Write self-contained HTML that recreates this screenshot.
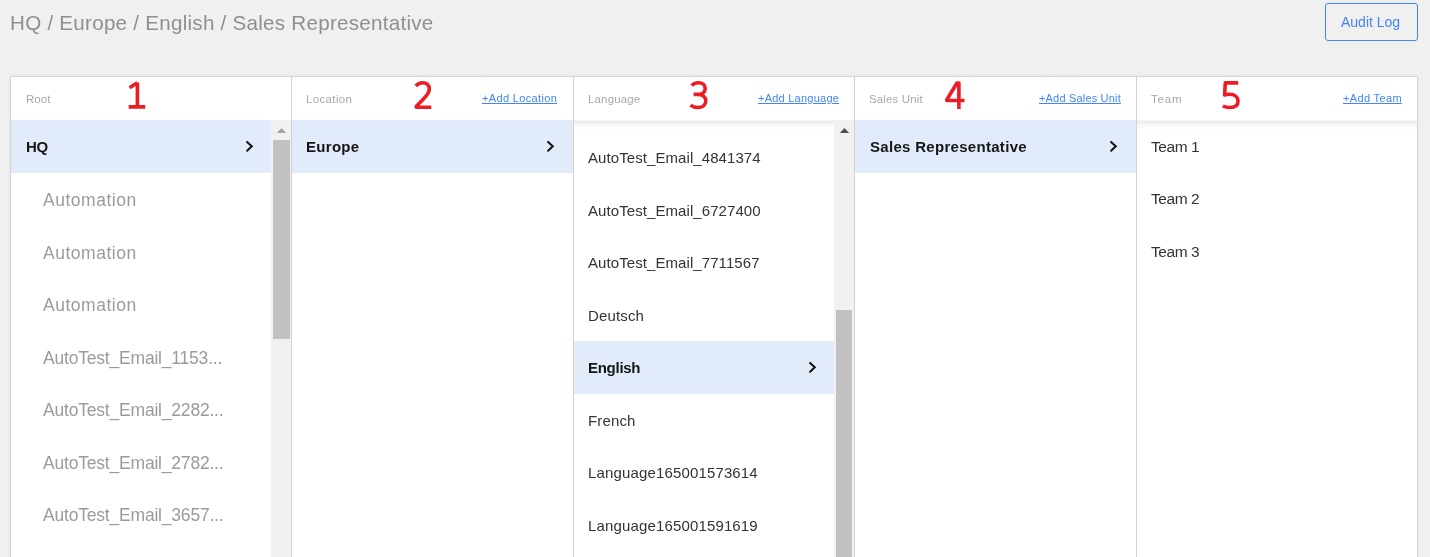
<!DOCTYPE html><html><head><meta charset="utf-8"><style>
*{box-sizing:border-box;margin:0;padding:0}
html,body{width:1430px;height:557px;overflow:hidden;background:#f0f0f0;font-family:"Liberation Sans",sans-serif}
body{position:relative}
.a{position:absolute;white-space:nowrap;will-change:transform}
</style></head><body>
<div class="a" style="left:10px;top:8.36px;font-size:20.6px;line-height:29px;color:#8f8f8f;font-weight:normal;letter-spacing:0.26px;">HQ / Europe / English / Sales Representative</div>
<div class="a" style="left:1325px;top:3px;width:93px;height:38px;border:1px solid #4285f4;border-radius:3px"></div>
<div class="a" style="left:1341px;top:11.85px;font-size:14px;line-height:20px;color:#4285f4;font-weight:normal;letter-spacing:0px;">Audit Log</div>
<div class="a" style="left:10px;top:76px;width:1408px;height:481px;background:#fff;border:1px solid #d6d6d6;border-bottom:none;border-radius:2px 2px 0 0;box-shadow:0 0 2px rgba(0,0,0,.1)"></div>
<div class="a" style="left:11px;top:120px;width:280px;height:10px;background:linear-gradient(rgba(0,0,0,0.02),rgba(0,0,0,.075) 15%,rgba(0,0,0,.02) 55%,rgba(0,0,0,0))"></div>
<div class="a" style="left:292px;top:120px;width:281px;height:10px;background:linear-gradient(rgba(0,0,0,0.02),rgba(0,0,0,.075) 15%,rgba(0,0,0,.02) 55%,rgba(0,0,0,0))"></div>
<div class="a" style="left:574px;top:120px;width:280px;height:10px;background:linear-gradient(rgba(0,0,0,0.02),rgba(0,0,0,.075) 15%,rgba(0,0,0,.02) 55%,rgba(0,0,0,0))"></div>
<div class="a" style="left:855px;top:120px;width:281px;height:10px;background:linear-gradient(rgba(0,0,0,0.02),rgba(0,0,0,.075) 15%,rgba(0,0,0,.02) 55%,rgba(0,0,0,0))"></div>
<div class="a" style="left:1137px;top:120px;width:280px;height:10px;background:linear-gradient(rgba(0,0,0,0.02),rgba(0,0,0,.075) 15%,rgba(0,0,0,.02) 55%,rgba(0,0,0,0))"></div>
<div class="a" style="left:291px;top:76px;width:1px;height:481px;background:#d2d2d2"></div>
<div class="a" style="left:573px;top:76px;width:1px;height:481px;background:#d2d2d2"></div>
<div class="a" style="left:854px;top:76px;width:1px;height:481px;background:#d2d2d2"></div>
<div class="a" style="left:1136px;top:76px;width:1px;height:481px;background:#d2d2d2"></div>
<div class="a" style="left:25.8px;top:90.72px;font-size:11.5px;line-height:16px;color:#a8a8a8;font-weight:normal;letter-spacing:0.05px;">Root</div>
<div class="a" style="left:306.3px;top:90.72px;font-size:11.5px;line-height:16px;color:#a8a8a8;font-weight:normal;letter-spacing:0.35px;">Location</div>
<div class="a" style="left:587.5px;top:90.72px;font-size:11.5px;line-height:16px;color:#a8a8a8;font-weight:normal;letter-spacing:0.15px;">Language</div>
<div class="a" style="left:868.8px;top:90.72px;font-size:11.5px;line-height:16px;color:#a8a8a8;font-weight:normal;letter-spacing:0.13px;">Sales Unit</div>
<div class="a" style="left:1150.8px;top:90.72px;font-size:11.5px;line-height:16px;color:#a8a8a8;font-weight:normal;letter-spacing:0.85px;">Team</div>
<div class="a" style="right:872.5px;top:91.09px;font-size:11px;line-height:15px;color:#4285f4;font-weight:normal;letter-spacing:0.35px;text-decoration:underline">+Add Location</div>
<div class="a" style="right:591px;top:91.09px;font-size:11px;line-height:15px;color:#4285f4;font-weight:normal;letter-spacing:0.24px;text-decoration:underline">+Add Language</div>
<div class="a" style="right:309px;top:91.09px;font-size:11px;line-height:15px;color:#4285f4;font-weight:normal;letter-spacing:0.18px;text-decoration:underline">+Add Sales Unit</div>
<div class="a" style="right:28px;top:91.09px;font-size:11px;line-height:15px;color:#4285f4;font-weight:normal;letter-spacing:0.35px;text-decoration:underline">+Add Team</div>
<div class="a" style="left:11px;top:120px;width:260px;height:52.5px;background:#e1ebfa"></div>
<div class="a" style="left:26px;top:136.30px;font-size:15px;line-height:21px;color:#161616;font-weight:bold;letter-spacing:-0.3px;">HQ</div>
<svg class="a" style="left:243.8px;top:139px;overflow:visible" width="11" height="14.7"><path d="M3.1 2.9 L7.8 7.35 L3.1 11.799999999999999" fill="none" stroke="#111" stroke-width="2" stroke-linecap="round" stroke-linejoin="miter"/></svg>
<div class="a" style="left:43.2px;top:188.04px;font-size:17.5px;line-height:24px;color:#9b9b9b;font-weight:normal;letter-spacing:0.52px;">Automation</div>
<div class="a" style="left:43.2px;top:240.54px;font-size:17.5px;line-height:24px;color:#9b9b9b;font-weight:normal;letter-spacing:0.52px;">Automation</div>
<div class="a" style="left:43.2px;top:293.04px;font-size:17.5px;line-height:24px;color:#9b9b9b;font-weight:normal;letter-spacing:0.52px;">Automation</div>
<div class="a" style="left:43.2px;top:345.54px;font-size:17.5px;line-height:24px;color:#9b9b9b;font-weight:normal;letter-spacing:-0.2px;">AutoTest_Email_1153...</div>
<div class="a" style="left:43.2px;top:398.04px;font-size:17.5px;line-height:24px;color:#9b9b9b;font-weight:normal;letter-spacing:-0.2px;">AutoTest_Email_2282...</div>
<div class="a" style="left:43.2px;top:450.54px;font-size:17.5px;line-height:24px;color:#9b9b9b;font-weight:normal;letter-spacing:-0.2px;">AutoTest_Email_2782...</div>
<div class="a" style="left:43.2px;top:503.04px;font-size:17.5px;line-height:24px;color:#9b9b9b;font-weight:normal;letter-spacing:-0.2px;">AutoTest_Email_3657...</div>
<div class="a" style="left:271px;top:120px;width:20px;height:437px;background:#f1f1f1"></div>
<svg class="a" style="left:276px;top:127px" width="11" height="7"><path d="M0.8 6 L5.5 1 L10.2 6 Z" fill="#a3a3a3"/></svg>
<div class="a" style="left:273px;top:140px;width:17px;height:199px;background:#c1c1c1"></div>
<div class="a" style="left:292px;top:120px;width:281px;height:52.5px;background:#e1ebfa"></div>
<div class="a" style="left:306px;top:136.30px;font-size:15px;line-height:21px;color:#161616;font-weight:bold;letter-spacing:0.3px;">Europe</div>
<svg class="a" style="left:545.0px;top:139px;overflow:visible" width="11" height="14.7"><path d="M3.1 2.9 L7.8 7.35 L3.1 11.799999999999999" fill="none" stroke="#111" stroke-width="2" stroke-linecap="round" stroke-linejoin="miter"/></svg>
<div class="a" style="left:588px;top:147.30px;font-size:15px;line-height:21px;color:#333;font-weight:normal;letter-spacing:0.08px;">AutoTest_Email_4841374</div>
<div class="a" style="left:588px;top:199.80px;font-size:15px;line-height:21px;color:#333;font-weight:normal;letter-spacing:0.08px;">AutoTest_Email_6727400</div>
<div class="a" style="left:588px;top:252.30px;font-size:15px;line-height:21px;color:#333;font-weight:normal;letter-spacing:0.08px;">AutoTest_Email_7711567</div>
<div class="a" style="left:588px;top:304.80px;font-size:15px;line-height:21px;color:#333;font-weight:normal;letter-spacing:0.15px;">Deutsch</div>
<div class="a" style="left:574px;top:341.0px;width:260px;height:52.5px;background:#e1ebfa"></div>
<div class="a" style="left:588px;top:357.30px;font-size:15px;line-height:21px;color:#161616;font-weight:bold;letter-spacing:-0.28px;">English</div>
<svg class="a" style="left:807.0px;top:360.3px;overflow:visible" width="11" height="14.7"><path d="M3.1 2.9 L7.8 7.35 L3.1 11.799999999999999" fill="none" stroke="#111" stroke-width="2" stroke-linecap="round" stroke-linejoin="miter"/></svg>
<div class="a" style="left:588px;top:409.80px;font-size:15px;line-height:21px;color:#333;font-weight:normal;letter-spacing:0.15px;">French</div>
<div class="a" style="left:588px;top:462.30px;font-size:15px;line-height:21px;color:#333;font-weight:normal;letter-spacing:0.15px;">Language165001573614</div>
<div class="a" style="left:588px;top:514.80px;font-size:15px;line-height:21px;color:#333;font-weight:normal;letter-spacing:0.15px;">Language165001591619</div>
<div class="a" style="left:834px;top:120px;width:20px;height:437px;background:#f1f1f1"></div>
<svg class="a" style="left:839px;top:127px" width="11" height="7"><path d="M0.8 6 L5.5 1 L10.2 6 Z" fill="#505050"/></svg>
<div class="a" style="left:836px;top:310px;width:16px;height:247px;background:#c1c1c1"></div>
<div class="a" style="left:855px;top:120px;width:281px;height:52.5px;background:#e1ebfa"></div>
<div class="a" style="left:869.5px;top:136.30px;font-size:15px;line-height:21px;color:#161616;font-weight:bold;letter-spacing:0.3px;">Sales Representative</div>
<svg class="a" style="left:1108.2px;top:139px;overflow:visible" width="11" height="14.7"><path d="M3.1 2.9 L7.8 7.35 L3.1 11.799999999999999" fill="none" stroke="#111" stroke-width="2" stroke-linecap="round" stroke-linejoin="miter"/></svg>
<div class="a" style="left:1151px;top:135.73px;font-size:15.5px;line-height:22px;color:#333;font-weight:normal;letter-spacing:-0.45px;">Team 1</div>
<div class="a" style="left:1151px;top:188.23px;font-size:15.5px;line-height:22px;color:#333;font-weight:normal;letter-spacing:-0.45px;">Team 2</div>
<div class="a" style="left:1151px;top:240.73px;font-size:15.5px;line-height:22px;color:#333;font-weight:normal;letter-spacing:-0.45px;">Team 3</div>
<svg class="a" style="left:0;top:0;overflow:visible" width="1" height="1"><path d="M137.4 82.5 L137.4 107 M129.5 87.8 L137.4 82.8 M128.6 106.9 L145.2 106.9" fill="none" stroke="#ec1c24" stroke-width="3.6" stroke-linecap="butt" stroke-linejoin="round"/></svg>
<svg class="a" style="left:0;top:0;overflow:visible" width="1" height="1"><path d="M415.8 86 C417.8 83.6 420 82.7 422.6 82.7 C426.6 82.7 429.3 85.2 429.3 89 C429.3 92.8 427 95.5 423 99.5 L416.3 106.3 L416.3 107.2 L431.3 107.2" fill="none" stroke="#ec1c24" stroke-width="3.6" stroke-linecap="butt" stroke-linejoin="round"/></svg>
<svg class="a" style="left:0;top:0;overflow:visible" width="1" height="1"><path d="M691.6 85.6 C693.5 83.6 696 82.7 698.6 82.7 C702.8 82.7 705.2 85.2 705.2 88.4 C705.2 92 702.4 94.4 697.8 94.4 L693.6 94.4 M697.8 94.4 C703 94.4 705.8 97.3 705.8 101 C705.8 105 702.5 107.5 697.8 107.5 C695 107.5 692.5 106.8 690.5 105.2" fill="none" stroke="#ec1c24" stroke-width="3.6" stroke-linecap="butt" stroke-linejoin="round"/></svg>
<svg class="a" style="left:0;top:0;overflow:visible" width="1" height="1"><path d="M958.9 109 L958.9 83 L957 83 L946.8 99.8 L946.8 100.5 L964.5 100.5" fill="none" stroke="#ec1c24" stroke-width="3.6" stroke-linecap="butt" stroke-linejoin="round"/></svg>
<svg class="a" style="left:0;top:0;overflow:visible" width="1" height="1"><path d="M1238.2 82.9 L1225.3 82.9 L1224.6 95 C1226 94.6 1227.8 94.3 1229.6 94.3 C1235 94.3 1238 97.3 1238 101.2 C1238 105.3 1234.8 107.5 1229.8 107.5 C1227.2 107.5 1224.8 107 1222.8 106" fill="none" stroke="#ec1c24" stroke-width="3.6" stroke-linecap="butt" stroke-linejoin="round"/></svg>
</body></html>
